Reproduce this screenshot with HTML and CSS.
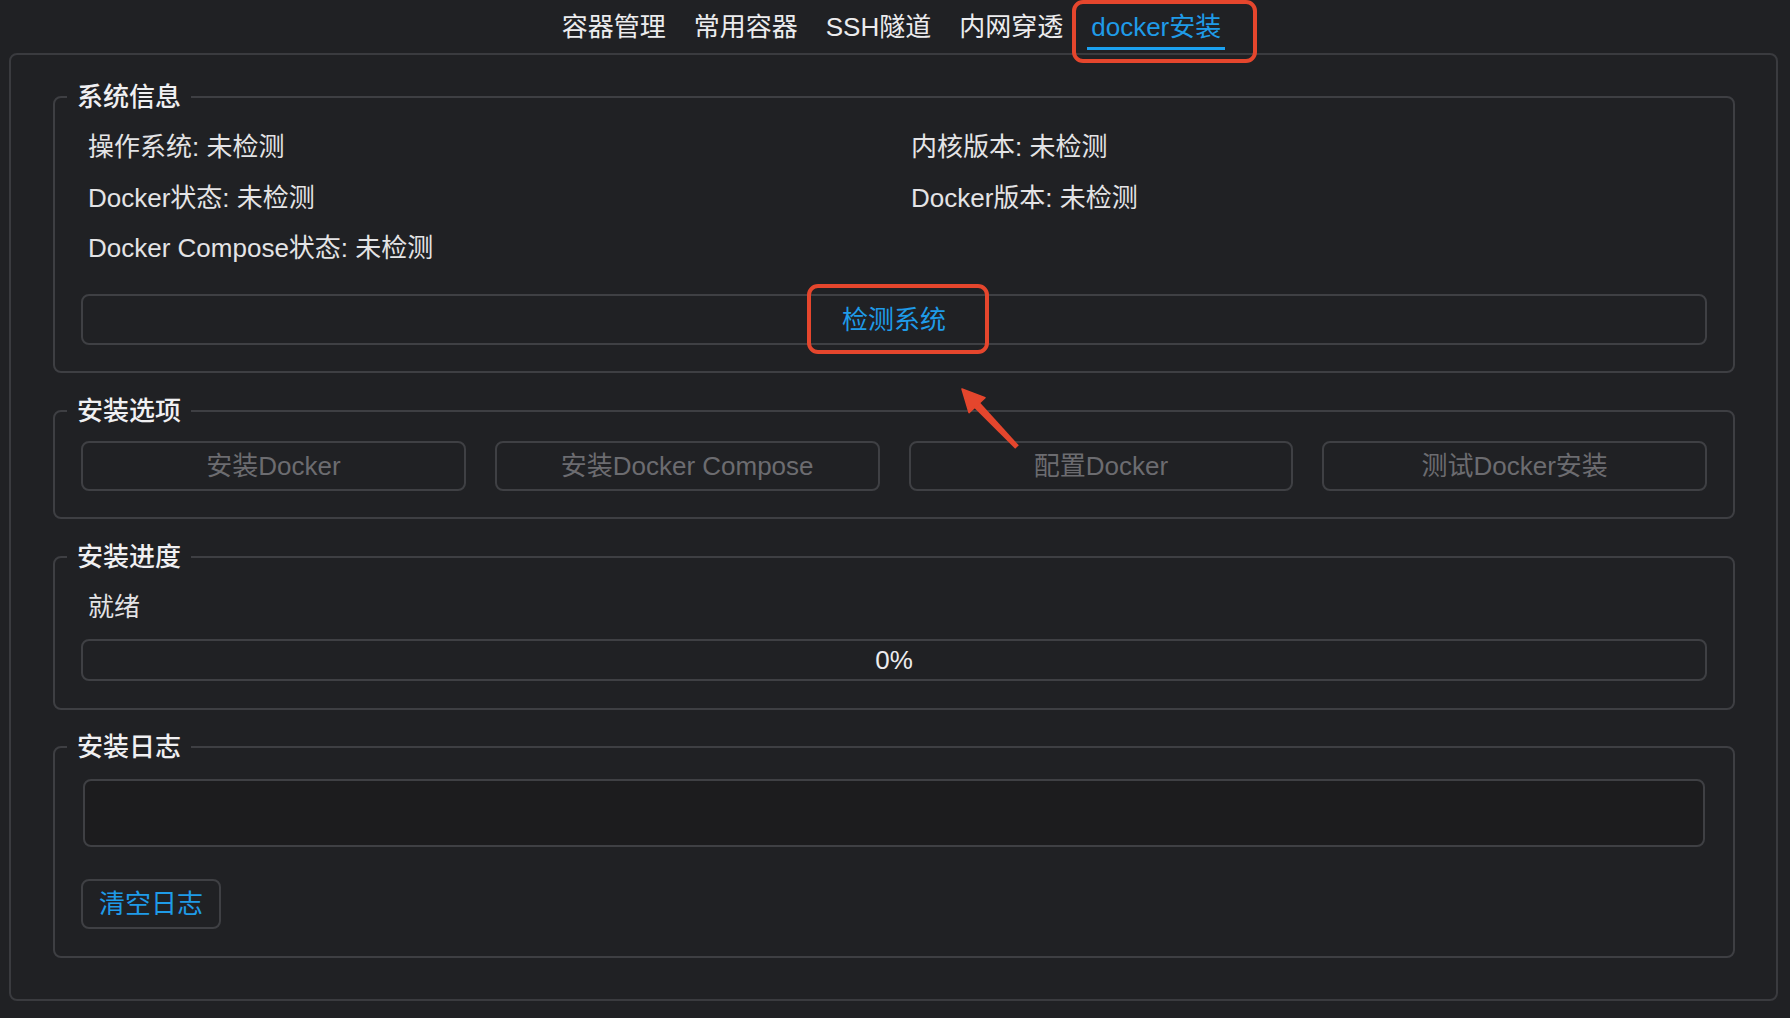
FILE: index.html
```html
<!DOCTYPE html>
<html lang="zh-CN">
<head>
<meta charset="utf-8">
<title>docker安装</title>
<link rel="stylesheet" href="styles.css">
</head>
<body>
<nav class="tabbar">
  <div class="tab">容器管理</div>
  <div class="tab">常用容器</div>
  <div class="tab">SSH隧道</div>
  <div class="tab">内网穿透</div>
  <div class="tab active">docker安装</div>
</nav>

<main class="frame">
  <fieldset class="group">
    <legend>系统信息</legend>
    <div class="info-grid">
      <div class="info">操作系统: 未检测</div>
      <div class="info">内核版本: 未检测</div>
      <div class="info">Docker状态: 未检测</div>
      <div class="info">Docker版本: 未检测</div>
      <div class="info">Docker Compose状态: 未检测</div>
    </div>
    <button class="btn btn-primary btn-wide">检测系统</button>
  </fieldset>

  <fieldset class="group group-options">
    <legend>安装选项</legend>
    <div class="options">
      <button class="btn btn-disabled">安装Docker</button>
      <button class="btn btn-disabled">安装Docker Compose</button>
      <button class="btn btn-disabled">配置Docker</button>
      <button class="btn btn-disabled">测试Docker安装</button>
    </div>
  </fieldset>

  <fieldset class="group group-progress">
    <legend>安装进度</legend>
    <div class="status">就绪</div>
    <div class="progress">0%</div>
  </fieldset>

  <fieldset class="group group-log">
    <legend>安装日志</legend>
    <div class="log"></div>
    <button class="btn btn-primary btn-clear">清空日志</button>
  </fieldset>
</main>

<div class="mark mark-tab"></div>
<div class="mark mark-btn"></div>
<svg class="arrow" width="80" height="80" viewBox="0 0 80 80">
  <polygon points="27.9,20.3 68.8,65.3 65.2,68.7 22.1,25.7" fill="#e5462d"/>
  <polygon points="12,9 35,17.6 19,32.6" fill="#e5462d" stroke="#e5462d" stroke-width="1.5" stroke-linejoin="round"/>
</svg>
</body>
</html>
```

FILE: styles.css
```css
* { box-sizing: border-box; }

html, body {
  margin: 0;
  background: #202124;
}

body {
  position: relative;
  width: 1790px;
  height: 1018px;
  overflow: hidden;
  color: #e4e4e6;
  font-family: "Liberation Sans", "Noto Sans CJK SC", sans-serif;
  font-size: 26px;
}

.tabbar {
  height: 53px;
  display: flex;
  justify-content: center;
  align-items: flex-start;
  gap: 20px;
  padding-top: 12px;
  padding-right: 7px;
}

.tab {
  line-height: 30px;
  padding: 0 4px 5px;
  border-bottom: 3px solid transparent;
  color: #ececee;
}

.tab.active {
  color: #1f9be8;
  border-bottom-color: #1ba1f0;
}

.frame {
  display: block;
  margin: 0 12px 0 9px;
  height: 948px;
  border: 2px solid #3a3b3f;
  border-radius: 8px;
  padding: 27px 41px 0 42px;
}

.group {
  margin: 23px 0 0;
  padding: 20px 26px 26px;
  border: 2px solid #3e3f43;
  border-radius: 8px;
  min-width: 0;
}

.group:first-child { margin-top: 0; }

.group legend {
  padding: 0 10px;
  margin-left: -14px;
  line-height: 30px;
  font-weight: 500;
  color: #f0f0f2;
}

.info-grid {
  display: grid;
  grid-template-columns: 823px 1fr;
  row-gap: 20.5px;
  padding-left: 7px;
  margin-bottom: 31px;
}

.info {
  line-height: 30px;
}

.btn {
  display: block;
  font: inherit;
  background: transparent;
  border: 2px solid #3f4044;
  border-radius: 8px;
  line-height: 30px;
  padding: 0;
  text-align: center;
}

.btn-primary { color: #1f9be8; }
.btn-disabled { color: #6c6c70; }

.btn-wide {
  width: 100%;
  height: 51px;
}

.group-options { padding-top: 15px; }

.options {
  display: grid;
  grid-template-columns: repeat(4, 1fr);
  column-gap: 29px;
}

.options .btn { height: 50px; }

.group-progress { padding-bottom: 27px; }

.status {
  line-height: 30px;
  padding-left: 7px;
}

.progress {
  margin-top: 17px;
  height: 42px;
  border: 2px solid #3f4044;
  border-radius: 8px;
  text-align: center;
  line-height: 38px;
  color: #ececee;
}

.group-log {
  margin-top: 22px;
  padding-top: 17px;
  padding-bottom: 27px;
}

.log {
  margin: 0 2px;
  height: 68px;
  background: #1c1c1e;
  border: 2px solid #3f4044;
  border-radius: 8px;
}

.btn-clear {
  margin-top: 32px;
  width: 140px;
  height: 50px;
}

.mark {
  position: absolute;
  border: 4px solid #e5462d;
  border-radius: 11px;
}

.mark-tab {
  left: 1072px;
  top: 0;
  width: 185px;
  height: 63px;
}

.mark-btn {
  left: 807px;
  top: 284px;
  width: 182px;
  height: 70px;
}

.arrow {
  position: absolute;
  left: 950px;
  top: 380px;
}
```
